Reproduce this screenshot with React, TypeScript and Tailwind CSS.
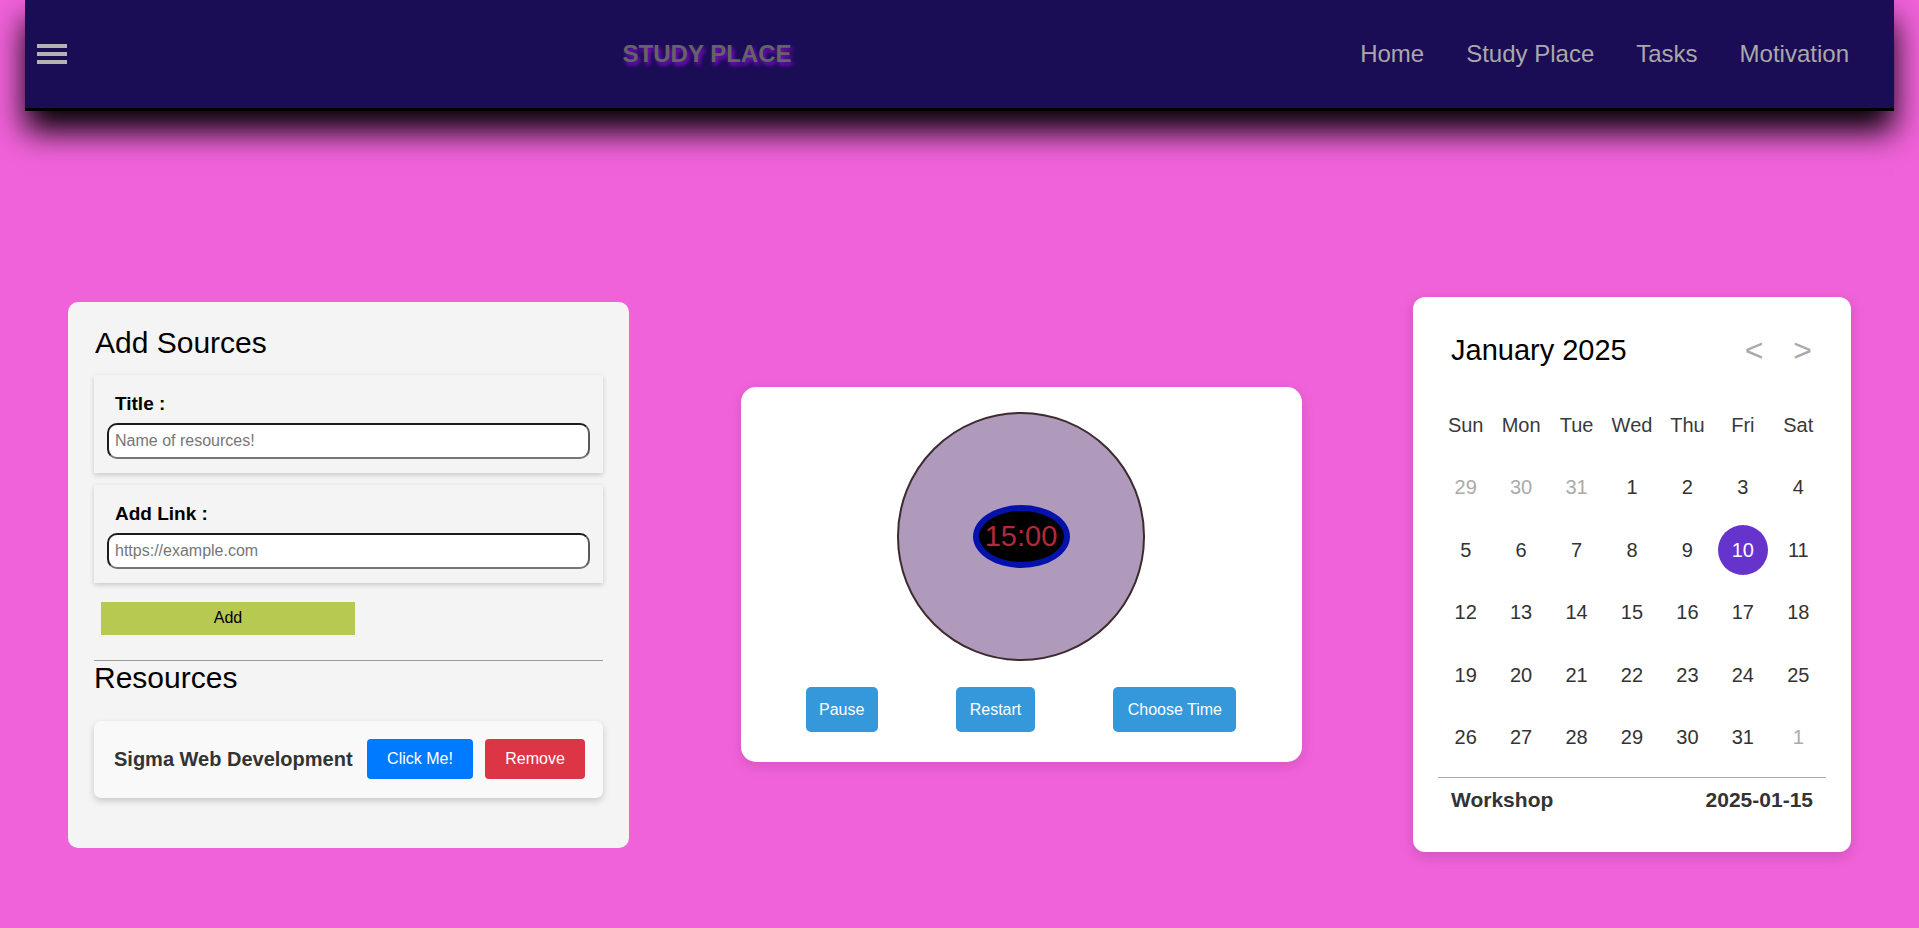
import React from "react";

const DAYS = ["Sun", "Mon", "Tue", "Wed", "Thu", "Fri", "Sat"];

// calendar cells for January 2025, with spill-over days greyed out
const CELLS: { n: number; other?: boolean }[] = [
  { n: 29, other: true },
  { n: 30, other: true },
  { n: 31, other: true },
  ...Array.from({ length: 31 }, (_, i) => ({ n: i + 1 })),
  { n: 1, other: true },
];

function Navbar() {
  return (
    <nav className="mx-[25px] h-[111px] bg-[#1b0c56] border-b-[3px] border-black shadow-[0_20px_30px_#000] flex items-center justify-between pl-[12px] pr-[22px] relative z-10">
      <button className="w-[40px] flex flex-col gap-[4px]">
        <span className="block w-[30px] h-[4px] bg-[#b4b4b4]" />
        <span className="block w-[30px] h-[4px] bg-[#b4b4b4]" />
        <span className="block w-[30px] h-[4px] bg-[#b4b4b4]" />
      </button>
      <h1 className="text-[24px] font-bold text-[#646464] [text-shadow:2px_3px_4px_#8a0fd6] mr-[2px]">STUDY PLACE</h1>
      <ul className="flex text-[24px] text-[#a9a9a9]">
        <li className="px-[21px]">Home</li>
        <li className="px-[21px]">Study Place</li>
        <li className="px-[21px]">Tasks</li>
        <li className="pl-[21px] pr-[23px]">Motivation</li>
      </ul>
    </nav>
  );
}

function SourceField({ label, placeholder }: { label: string; placeholder: string }) {
  return (
    <div className="bg-[#f4f4f4] shadow-[0_2px_5px_rgba(0,0,0,0.18)] pt-[18px] pb-[14px] px-[13px]">
      <label className="block pl-[8px] text-[19px] leading-[22px] font-bold text-black">{label}</label>
      <input
        placeholder={placeholder}
        className="mt-[8px] w-full h-[36px] rounded-[10px] bg-white border-2 border-[#1c1c1c] border-b-[#767676] border-r-[#5a5a5a] px-[6px] text-[16px] placeholder:text-[#767676] outline-none"
      />
    </div>
  );
}

function SourcesCard() {
  return (
    <div className="w-[561px] bg-[#f4f4f4] rounded-[10px] pt-[24px] pb-[50px] px-[26px]">
      <h2 className="text-[30px] leading-[34px] text-black ml-[1px]">Add Sources</h2>
      <div className="mt-[15px] flex flex-col gap-[12px]">
        <SourceField label="Title :" placeholder="Name of resources!" />
        <SourceField label="Add Link :" placeholder="https://example.com" />
      </div>
      <button className="mt-[19px] ml-[7px] w-[254px] h-[33px] bg-[#b8c952] text-[16px] text-black">Add</button>
      <hr className="mt-[25px] border-0 h-px bg-[#9a9a9a]" />
      <h2 className="text-[30px] leading-[34px] text-black">Resources</h2>
      <div className="mt-[26px] h-[77px] bg-[#f9f9f9] rounded-[7px] shadow-[0_3px_7px_rgba(0,0,0,0.18)] flex items-center justify-between pl-[20px] pr-[18px]">
        <span className="text-[20px] font-bold text-[#333333]">Sigma Web Development</span>
        <div className="flex gap-[12px]">
          <button className="h-[40px] w-[106px] rounded-[4px] bg-[#007bff] text-white text-[16px]">Click Me!</button>
          <button className="h-[40px] w-[100px] rounded-[4px] bg-[#dc3545] text-white text-[16px]">Remove</button>
        </div>
      </div>
    </div>
  );
}

function TimerCard() {
  return (
    <div className="w-[561px] bg-white rounded-[15px] shadow-[0_4px_14px_rgba(0,0,0,0.12)] pt-[25px] pb-[30px] px-[26px] flex flex-col items-center">
      <div className="w-[248px] h-[249px] rounded-full bg-[#b09abc] border-2 border-[#3d2b30] flex items-center justify-center">
        <div className="w-[97px] h-[63px] rounded-[50%] bg-black border-[6px] border-[#0412ab] flex items-center justify-center">
          <span className="text-[29px] leading-none text-[#b02a3c]">15:00</span>
        </div>
      </div>
      <div className="mt-[26px] w-full flex justify-around">
        <button className="h-[45px] w-[72px] rounded-[5px] bg-[#3498db] text-white text-[16px]">Pause</button>
        <button className="h-[45px] w-[79px] rounded-[5px] bg-[#3498db] text-white text-[16px]">Restart</button>
        <button className="h-[45px] w-[123px] rounded-[5px] bg-[#3498db] text-white text-[16px]">Choose Time</button>
      </div>
    </div>
  );
}

function CalendarCard() {
  return (
    <div className="w-[438px] bg-white rounded-[12px] shadow-[0_4px_14px_rgba(0,0,0,0.15)] pt-[36px] pb-[40px] px-[25px]">
      <div className="flex items-center justify-between pl-[13px] pr-[14px]">
        <h2 className="text-[29px] leading-[34px] text-black">January 2025</h2>
        <div className="flex gap-[30px] text-[32px] leading-[34px] text-[#aaaaaa]">
          <button>&lt;</button>
          <button>&gt;</button>
        </div>
      </div>
      <div className="mt-[33px] grid grid-cols-7 gap-y-[12.5px]">
        {DAYS.map((d) => (
          <div key={d} className="h-[50px] flex items-center justify-center text-[20px] text-[#3a3a3a]">
            {d}
          </div>
        ))}
        {CELLS.map((c, i) => (
          <div key={i} className="h-[50px] flex items-center justify-center">
            {c.n === 10 && !c.other ? (
              <span className="w-[50px] h-[50px] rounded-full bg-[#6633cc] text-white text-[20px] flex items-center justify-center">10</span>
            ) : (
              <span className={`text-[20px] ${c.other ? "text-[#aaaaaa]" : "text-[#333333]"}`}>{c.n}</span>
            )}
          </div>
        ))}
      </div>
      <hr className="mt-[14.5px] border-0 h-px bg-[#aaaaaa]" />
      <div className="mt-[10.5px] flex justify-between px-[13px] text-[21px] leading-[24px] font-bold text-[#333333]">
        <span>Workshop</span>
        <span>2025-01-15</span>
      </div>
    </div>
  );
}

export default function App() {
  return (
    <div className="min-h-screen bg-[#f062d9] font-['Liberation_Sans',Arial,sans-serif] overflow-hidden">
      <Navbar />
      <main className="h-[817px] pt-[110px] px-[68px] flex items-center justify-between">
        <SourcesCard />
        <TimerCard />
        <CalendarCard />
      </main>
    </div>
  );
}
